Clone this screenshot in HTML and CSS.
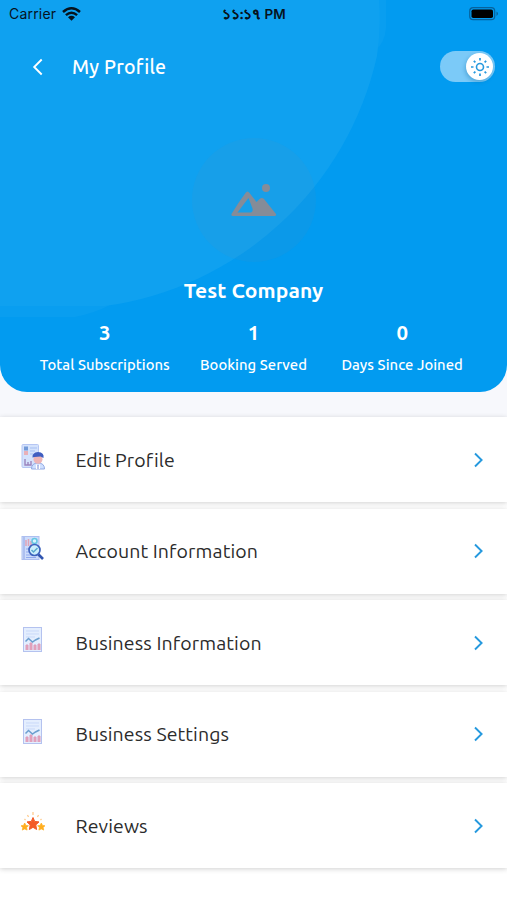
FILE: index.html
```html
<!DOCTYPE html>
<html lang="en">
<head>
<meta charset="utf-8">
<title>My Profile</title>
<link rel="stylesheet" href="styles.css">
</head>
<body>
<svg class="defs" width="0" height="0" aria-hidden="true">
  <symbol id="chevron" viewBox="0 0 12 18"><path d="M2 2.500 8.600 9 2 15.500" fill="none" stroke="#2599de" stroke-width="1.900"/></symbol>
  <symbol id="report" viewBox="0 0 24 26">
    <rect x="2.500" y=".5" width="18" height="24" fill="#e4eefe" stroke="#b4c2ef"/>
    <path d="M5 4h13M5 7h13M5 10h9" stroke="#c9d9f9"/>
    <path d="M5 23v-5h2v5m2 0v-7h2v7m2 0v-5h2v5m2 0v-6h2v6" fill="#e6a4bb" stroke="#dd9dbc"/>
    <path d="m4.500 14.500 3-3 4 3.500 3-2 4-2" fill="none" stroke="#6c9fcf" stroke-width="1.500"/>
  </symbol>
</svg>
<header class="hero">
  <svg class="backdrop" width="507" height="392" aria-hidden="true">
    <path d="M376 0H386V28Q385 42 376 50ZM0 306V317H75Q95 313 110 305Z" fill="#fff" opacity=".03"/>
    <path d="M0 0H379Q381 30 377 56A324 324 0 0 1 105 306H0Z" fill="#0fa1f0"/>
  </svg>
  <div class="status">
    <span class="carrier">Carrier</span>
    <svg class="wifi" width="19" height="14" viewBox="0 0 19 14"><path d="M1 5Q9.500-2.400 18 5M3.900 8.100Q9.500 3.300 15.100 8.100" fill="none" stroke="#06131d" stroke-width="2.500"/><path d="m6 10.200q3.500-2.700 7 0L9.500 13.800Z" fill="#06131d"/></svg>
    <span class="time"><span class="digits">১১:১৭</span> PM</span>
    <svg class="battery" width="30" height="14" viewBox="0 0 30 14"><rect x=".7" y=".7" width="25" height="12" rx="3.500" fill="none" stroke="#07629c" stroke-width="1.200"/><rect x="2.500" y="2.400" width="21.500" height="8.600" rx="1.800"/><path d="M27.500 4.500q3 2.200 0 4.400Z" fill="#07629c"/></svg>
  </div>
  <div class="bar">
    <svg class="back" width="12" height="18" viewBox="0 0 12 18"><path d="M10.700 1.500 3.200 9l7.500 7.500" fill="none" stroke="#fff" stroke-width="1.900"/></svg>
    <h1>My Profile</h1>
    <div class="toggle"><div class="knob">
      <svg width="20" height="20" viewBox="-10 -10 20 20" fill="none" stroke="#2599de"><circle r="3.500" stroke-width="1.600"/><path d="M0-9v2.500M0 6.500V9M-9 0h2.500M6.500 0H9M-6.200-6.200l1.600 1.600M4.600 4.600l1.600 1.600M-6.200 6.200l1.600-1.600M4.600-4.600l1.600-1.600" stroke-width="1.700"/></svg>
    </div></div>
  </div>
  <div class="avatar">
    <svg width="46" height="34" viewBox="0 0 46 34" fill="#858c98"><path fill-rule="evenodd" d="M.5 31Q7 20 14.500 10q2-3 4 0L25.500 19l3-3q2.500-2 4.500 0L45 31q.5 2-1.500 2H2q-2 0-1.500-2ZM6.500 29.500h12q4 0 3-4L17.500 15Z"/><circle cx="35" cy="5" r="4"/></svg>
  </div>
  <h2>Test Company</h2>
  <div class="stats">
    <div class="stat"><b>3</b><span>Total Subscriptions</span></div>
    <div class="stat"><b>1</b><span>Booking Served</span></div>
    <div class="stat"><b>0</b><span>Days Since Joined</span></div>
  </div>
</header>
<main class="list">
  <a class="row"><svg class="icon" viewBox="0 0 24 26">
    <rect x="1" y=".5" width="16.500" height="23" rx="1" fill="#d4e2fc" stroke="#b6c6f3"/>
    <rect x="3" y="2.500" width="4" height="4" fill="#739ad8"/><rect x="3" y="7" width="4" height="4" fill="#e8b0b8"/>
    <path d="M9 4h7M9 7h5M9 10h3" stroke="#a6bff2"/><path d="M4 15v6h6v-4M7 21v-3" fill="none" stroke="#9b84bd" stroke-width="1.400"/>
    <path d="M10.500 25q0-6 6.500-6t6.500 6Z" fill="#cfe0ff" stroke="#93aae3"/>
    <circle cx="17" cy="15.300" r="4.500" fill="#edb4b6"/><path d="M11.500 13.500Q11 8.500 17 8q6.500.5 5.500 6l-3-1.500-6 .5Z" fill="#405dc0"/><path d="m15 20 2 2 2-2v5h-4Z" fill="#fff"/><path d="M17 21v4" stroke="#7787cf"/>
  </svg><span>Edit Profile</span><svg class="go"><use href="#chevron"/></svg></a>
  <a class="row"><svg class="icon" viewBox="0 0 24 26">
    <rect x="1" y=".5" width="17" height="23" fill="#cddcfb" stroke="#aebff0"/><path d="M3 1v22" stroke="#8fa4e5"/>
    <path d="M5 4v6M7.500 3v7M10 5v5" stroke="#dfa3b6" stroke-width="1.500"/><path d="M5 13h6M5 16h6M5 19h8M5 21.500h10" stroke="#91a9ed"/>
    <circle cx="13.500" cy="5" r="2.500" fill="#d8f5ff" stroke="#66c7e2" stroke-width="1.500"/>
    <circle cx="13.500" cy="14" r="5.500" fill="#cceffc" stroke="#3d63bd" stroke-width="1.700"/><path d="m10.500 14 2 2 4-4" fill="none" stroke="#59a7ce" stroke-width="1.500"/><path d="m17.500 18.500 4.500 4.500" stroke="#3155b0" stroke-width="2.600"/>
  </svg><span>Account Information</span><svg class="go"><use href="#chevron"/></svg></a>
  <a class="row"><svg class="icon"><use href="#report"/></svg><span>Business Information</span><svg class="go"><use href="#chevron"/></svg></a>
  <a class="row"><svg class="icon"><use href="#report"/></svg><span>Business Settings</span><svg class="go"><use href="#chevron"/></svg></a>
  <a class="row"><svg class="icon" viewBox="0 0 24 26">
    <path d="m12 7.500 1.700 3.900 4.300.5-3.200 3 .8 4.600-3.600-2.200-3.600 2.200.8-4.600-3.200-3 4.300-.5Z" fill="#f35b27" stroke="#f35b27"/>
    <path id="small" d="m3.700 13 1.200 2.400 2.500.3-1.800 1.900.5 2.500-2.400-1.200-2.400 1.200.5-2.500L0 15.700l2.500-.3Z" fill="#ffae20" stroke="#ffae20" stroke-width=".7"/><use href="#small" x="16.600"/>
    <path d="M12 2v3M6.500 5l1 2M17.500 5l-1 2M3.500 9l1 1M20.500 9l-1 1" stroke="#ffc887" stroke-width="1.200"/>
  </svg><span>Reviews</span><svg class="go"><use href="#chevron"/></svg></a>
</main>
</body>
</html>
```
FILE: styles.css
```css
* { box-sizing: border-box; }
body { margin: 0; width: 507px; height: 900px; overflow: hidden; background: #fff; font-family: Ubuntu, "Noto Sans", sans-serif; box-shadow: inset 0 417px #f7f8fc; }
.defs { display: block; height: 0; }
svg { display: block; flex: none; }
h1, h2 { margin: 0; }
.hero { position: relative; height: 392px; background: #029bf0; border-radius: 0 0 27px 27px; overflow: hidden; color: #fff; display: flex; flex-direction: column; align-items: center; }
.backdrop { position: absolute; inset: 0; }
.hero > :not(.backdrop) { position: relative; }
.status { width: 100%; height: 27px; padding: 0 8px 0 9px; display: grid; grid-template-columns: 53px 160px 64px 1fr; align-items: center; color: #06131d; font-family: Inter, "Liberation Sans", sans-serif; }
.carrier { font-size: 14px; letter-spacing: .2px; }
.status .battery { justify-self: end; }
.time { font-size: 13.500px; line-height: 20px; font-weight: 600; white-space: nowrap; letter-spacing: .2px; }
.digits { letter-spacing: -.3px; -webkit-text-stroke: .3px #06131d; }
.bar { width: 100%; height: 79px; padding: 0 12px 0 31px; display: flex; align-items: center; }
h1 { margin-left: 29px; flex: 1; font-size: 19.500px; line-height: 28px; font-weight: 500; letter-spacing: .2px; }
.toggle { width: 55px; height: 31px; padding: 2px; border-radius: 16px; background: #7bcaf8; display: flex; justify-content: flex-end; }
.knob { width: 27px; height: 27px; border-radius: 50%; background: #fff; display: grid; place-items: center; box-shadow: -1px 2px 4px #0064a055; }
.avatar { width: 124px; height: 124px; margin-top: 32px; border-radius: 50%; background: #858c9814; display: grid; place-items: center; }
h2 { margin-top: 14px; font-size: 21px; line-height: 28px; font-weight: 700; white-space: nowrap; letter-spacing: .1px; }
.stats { width: 446px; margin-top: 15px; display: grid; grid-template-columns: repeat(3, 1fr); }
.stat { display: flex; flex-direction: column; align-items: center; white-space: nowrap; }
.stat b { font-size: 20.500px; line-height: 28px; font-weight: 600; }
.stat span { margin-top: 8px; font-size: 14.800px; line-height: 20px; font-weight: 500; letter-spacing: .05px; }
.list { margin-top: 25px; display: flex; flex-direction: column; gap: 6.600px; }
.row { height: 85px; padding: 0 22px 0 21px; display: flex; align-items: center; background: #fff; box-shadow: 0 1px 5px #00000030; color: #2b2b2b; }
.icon { width: 24px; height: 26px; margin-top: -5px; }
.row span { flex: 1; margin-left: 30.500px; font-size: 19.500px; line-height: 28px; white-space: nowrap; letter-spacing: .1px; }
.go { width: 12px; height: 18px; }
```
